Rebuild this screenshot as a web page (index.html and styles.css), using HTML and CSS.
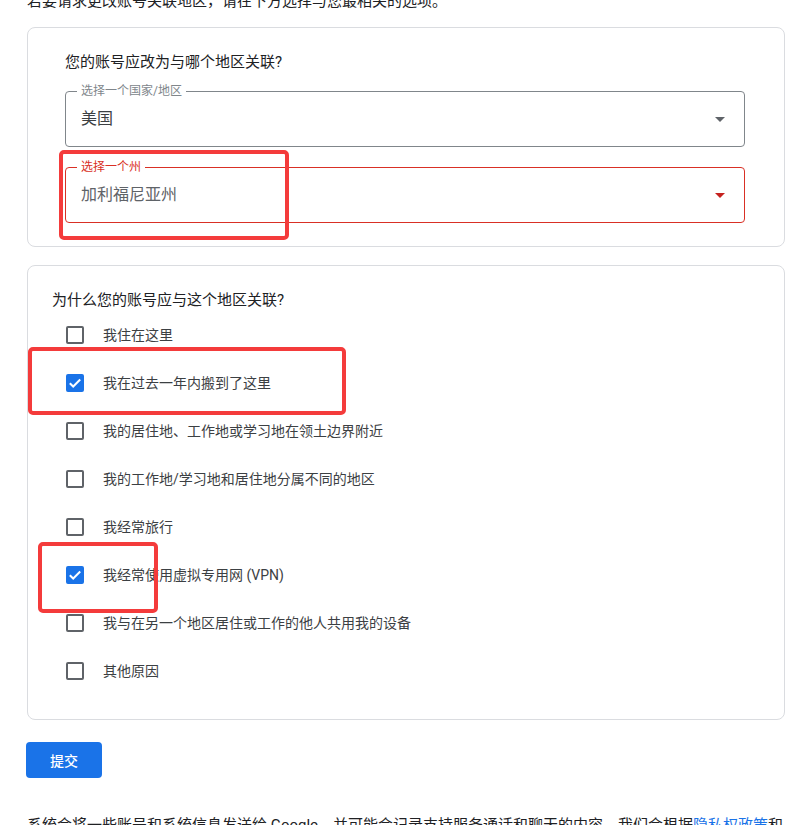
FILE: index.html
```html
<!DOCTYPE html>
<html lang="zh-CN">
<head>
<meta charset="utf-8">
<title>更改账号关联地区</title>
<link rel="stylesheet" href="styles.css">
</head>
<body>
<div class="page">
  <p class="intro">若要请求更改账号关联地区，请在下方选择与您最相关的选项。</p>

  <section class="card card-region">
    <div class="question">您的账号应改为与哪个地区关联?</div>
    <div class="field">
      <span class="field-label">选择一个国家/地区</span>
      <span class="field-value">美国</span>
      <svg class="field-arrow" viewBox="0 0 24 24" width="24" height="24"><path d="M7 10l5 5 5-5z"/></svg>
    </div>
    <div class="field field-error">
      <span class="field-label">选择一个州</span>
      <span class="field-value">加利福尼亚州</span>
      <svg class="field-arrow" viewBox="0 0 24 24" width="24" height="24"><path d="M7 10l5 5 5-5z"/></svg>
    </div>
  </section>

  <section class="card card-reason">
    <div class="question">为什么您的账号应与这个地区关联?</div>
    <ul class="options">
      <li class="option"><span class="box"></span><span class="label">我住在这里</span></li>
      <li class="option"><span class="box checked"><svg viewBox="0 0 18 18" width="18" height="18"><polyline points="3.8,9.2 7.2,12.5 14.2,5.5"/></svg></span><span class="label">我在过去一年内搬到了这里</span></li>
      <li class="option"><span class="box"></span><span class="label">我的居住地、工作地或学习地在领土边界附近</span></li>
      <li class="option"><span class="box"></span><span class="label">我的工作地/学习地和居住地分属不同的地区</span></li>
      <li class="option"><span class="box"></span><span class="label">我经常旅行</span></li>
      <li class="option"><span class="box checked"><svg viewBox="0 0 18 18" width="18" height="18"><polyline points="3.8,9.2 7.2,12.5 14.2,5.5"/></svg></span><span class="label">我经常使用虚拟专用网 (VPN)</span></li>
      <li class="option"><span class="box"></span><span class="label">我与在另一个地区居住或工作的他人共用我的设备</span></li>
      <li class="option"><span class="box"></span><span class="label">其他原因</span></li>
    </ul>
  </section>

  <button class="submit" type="button">提交</button>

  <p class="notice">系统会将一些账号和系统信息发送给 Google，并可能会记录支持服务通话和聊天的内容。我们会根据<a href="#">隐私权政策</a>和<a href="#">服务条款</a>使用这些信息来解决技术问题和改进我们的服务。</p>

  <div class="mark mark-1"></div>
  <div class="mark mark-2"></div>
  <div class="mark mark-3"></div>
</div>
</body>
</html>
```

FILE: styles.css
```css
* { box-sizing: border-box; }

body {
  margin: 0;
  background: #ffffff;
  font-family: Roboto, "Noto Sans CJK SC", "Noto Sans", sans-serif;
  color: #202124;
  overflow: hidden;
}

.page {
  position: relative;
  display: flow-root;
  padding: 0 15px 0 27px;
}

.intro {
  margin: -11px 0 0;
  font-size: 15px;
  line-height: 24px;
  color: #202124;
}

.card {
  border: 1px solid #dadce0;
  border-radius: 8px;
  background: #fff;
}

.card-region {
  margin-top: 14px;
  padding: 23px 39px 23px 37px;
}

.question {
  font-size: 15px;
  line-height: 22px;
  color: #202124;
}

.card-region .question {
  margin-bottom: 18px;
}

.field {
  position: relative;
  display: flex;
  align-items: center;
  height: 56px;
  border: 1px solid #80868b;
  border-radius: 4px;
  padding: 0 12px 0 15px;
}

.field + .field {
  margin-top: 20px;
}

.field-label {
  position: absolute;
  top: -9px;
  left: 11px;
  padding: 0 4px;
  background: #fff;
  font-size: 12px;
  line-height: 16px;
  color: #80868b;
}

.field-value {
  flex: 1;
  font-size: 16px;
  line-height: 24px;
  color: #3c4043;
}

.field-arrow {
  fill: #5f6368;
  flex: none;
}

.field-error {
  border-color: #d93025;
}

.field-error .field-label {
  color: #d93025;
}

.field-error .field-value {
  color: #5f6368;
}

.field-error .field-arrow {
  fill: #c5221f;
}

.card-reason {
  margin-top: 18px;
  padding: 23px 24px 24px;
}

.options {
  list-style: none;
  margin: 0;
  padding: 0;
}

.option {
  display: flex;
  align-items: center;
  height: 48px;
}

.box {
  flex: none;
  width: 18px;
  height: 18px;
  margin-left: 14px;
  margin-right: 19px;
  border: 2px solid #5f6368;
  border-radius: 2px;
  display: flex;
  align-items: center;
  justify-content: center;
}

.box.checked {
  background: #1a73e8;
  border-color: #1a73e8;
}

.box svg {
  flex: none;
  fill: none;
  stroke: #fff;
  stroke-width: 2;
  margin: -2px;
}

.label {
  font-size: 14px;
  line-height: 20px;
  color: #3c4043;
}

.submit {
  display: block;
  margin-top: 22px;
  margin-left: -1px;
  width: 76px;
  height: 36px;
  border: none;
  border-radius: 4px;
  background: #1a73e8;
  color: #fff;
  font-family: Roboto, "Noto Sans CJK SC", sans-serif;
  font-size: 14px;
  font-weight: 500;
  cursor: pointer;
}

.notice {
  margin: 35px 0 0;
  font-size: 15px;
  line-height: 24px;
  color: #202124;
}

.notice a {
  color: #1a73e8;
  text-decoration: none;
}

.mark {
  position: absolute;
  border: 4px solid #f43b3b;
  border-radius: 5px;
  pointer-events: none;
}

.mark-1 { left: 59px; top: 150px; width: 230px; height: 90px; }
.mark-2 { left: 28px; top: 347px; width: 318px; height: 68px; }
.mark-3 { left: 38px; top: 542px; width: 120px; height: 71px; }
```
